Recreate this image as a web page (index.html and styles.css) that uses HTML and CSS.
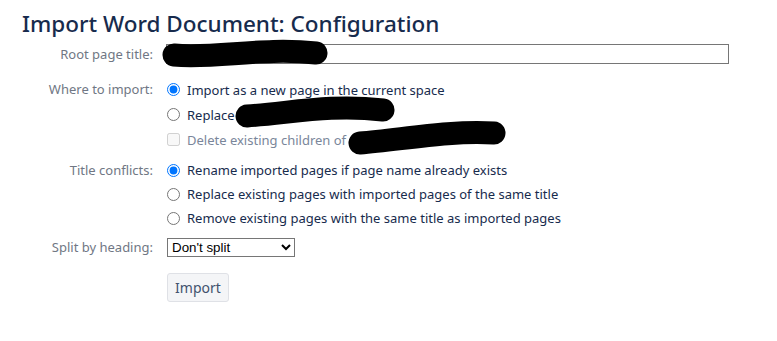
FILE: index.html
```html
<!DOCTYPE html>
<html lang="en">
<head>
    <meta charset="UTF-8">
    <title>Import Word Document: Configuration</title>
    <link rel="stylesheet" href="styles.css">
</head>
<body>

    <h1 class="page-title">Import Word Document: Configuration</h1>

    <form class="config-form">
        <!-- Root page -->
        <div class="field-row row-title">
            <label class="field-label" for="root-title">Root page title:</label>
            <div class="field-body">
                <input class="text-input" type="text" id="root-title">
            </div>
        </div>

        <!-- Where to import -->
        <div class="field-row row-where">
            <span class="field-label">Where to import:</span>
            <div class="field-body">
                <label class="option"><input type="radio" name="where" checked> Import as a new page in the current space</label>
                <label class="option"><input type="radio" name="where"> Replace</label>
                <label class="option disabled"><input type="checkbox" disabled> Delete existing children of</label>
            </div>
        </div>

        <!-- Title conflicts -->
        <div class="field-row row-conflicts">
            <span class="field-label">Title conflicts:</span>
            <div class="field-body">
                <label class="option"><input type="radio" name="conflict" checked> Rename imported pages if page name already exists</label>
                <label class="option"><input type="radio" name="conflict"> Replace existing pages with imported pages of the same title</label>
                <label class="option"><input type="radio" name="conflict"> Remove existing pages with the same title as imported pages</label>
            </div>
        </div>

        <!-- Split -->
        <div class="field-row row-split">
            <label class="field-label" for="split">Split by heading:</label>
            <div class="field-body">
                <select class="split-select" id="split">
                    <option>Don't split</option>
                    <option>Heading 1</option>
                    <option>Heading 2</option>
                </select>
            </div>
        </div>

        <div class="field-row row-submit">
            <span class="field-label"></span>
            <div class="field-body">
                <button type="button" class="import-button">Import</button>
            </div>
        </div>
    </form>

    <!-- marker scribbles drawn over the redacted names -->
    <svg class="redactions" width="777" height="341" viewBox="0 0 777 341">
        <path d="M174,55 C215,59 262,47 316,53" />
        <path d="M247,116 C292,113 330,104 383,110" />
        <path d="M360,143 C400,140 450,130 494,133" />
    </svg>

</body>
</html>
```

FILE: styles.css
```css
body {
    margin: 0;
    font-family: "Noto Sans", "Open Sans", sans-serif;
    font-size: 13px;
    color: #172b4d;
    background: #fff;
    position: relative;
    height: 341px;
    overflow: hidden;
}

.page-title {
    margin: 0;
    padding: 8px 0 0 22px;
    font-size: 22.5px;
    font-weight: 500;
    line-height: 32px;
    color: #172b4d;
}

.config-form {
    display: flex;
    flex-direction: column;
}

.field-row {
    display: grid;
    grid-template-columns: 153px 1fr;
    column-gap: 13px;
}

.field-label {
    text-align: right;
    color: #707784;
    line-height: 25px;
}

.field-body {
    display: flex;
    flex-direction: column;
    align-items: flex-start;
}

/* root page */
.row-title {
    margin-top: 4px;
}

.row-title .field-label {
    line-height: 20px;
}

.text-input {
    box-sizing: border-box;
    width: 563px;
    height: 20px;
    margin: 0;
    border: 1px solid #767676;
    border-radius: 0;
    font: inherit;
}

/* radio groups */
.row-where {
    margin-top: 13px;
}

.row-conflicts {
    margin-top: 6px;
}

.option {
    display: flex;
    align-items: center;
    gap: 7px;
    height: 25px;
    color: #172b4d;
    white-space: nowrap;
}

.row-conflicts .option {
    height: 24px;
}

.row-conflicts .field-label {
    line-height: 24px;
}

.option input {
    width: 13px;
    height: 13px;
    margin: 0 0 0 1px;
}

.option.disabled {
    color: #7a869a;
}

/* split */
.row-split {
    margin-top: 5px;
    align-items: center;
}

.split-select {
    width: 128px;
    height: 19px;
    margin: 0 0 0 1px;
    font-family: "Liberation Sans", Arial, sans-serif;
    font-size: 13.33px;
    border: 1px solid #767676;
    border-radius: 0;
    background: #fff;
    color: #000;
}

/* submit */
.row-submit {
    margin-top: 13px;
}

.import-button {
    box-sizing: border-box;
    width: 62px;
    height: 29px;
    margin-left: 1px;
    padding: 0;
    font-family: inherit;
    font-size: 14px;
    color: #42526e;
    background: #f4f5f7;
    border: 1px solid #dfe1e6;
    border-radius: 3px;
}

.redactions {
    position: absolute;
    top: 0;
    left: 0;
    pointer-events: none;
}

.redactions path {
    fill: none;
    stroke: #000;
    stroke-width: 23;
    stroke-linecap: round;
}
```
